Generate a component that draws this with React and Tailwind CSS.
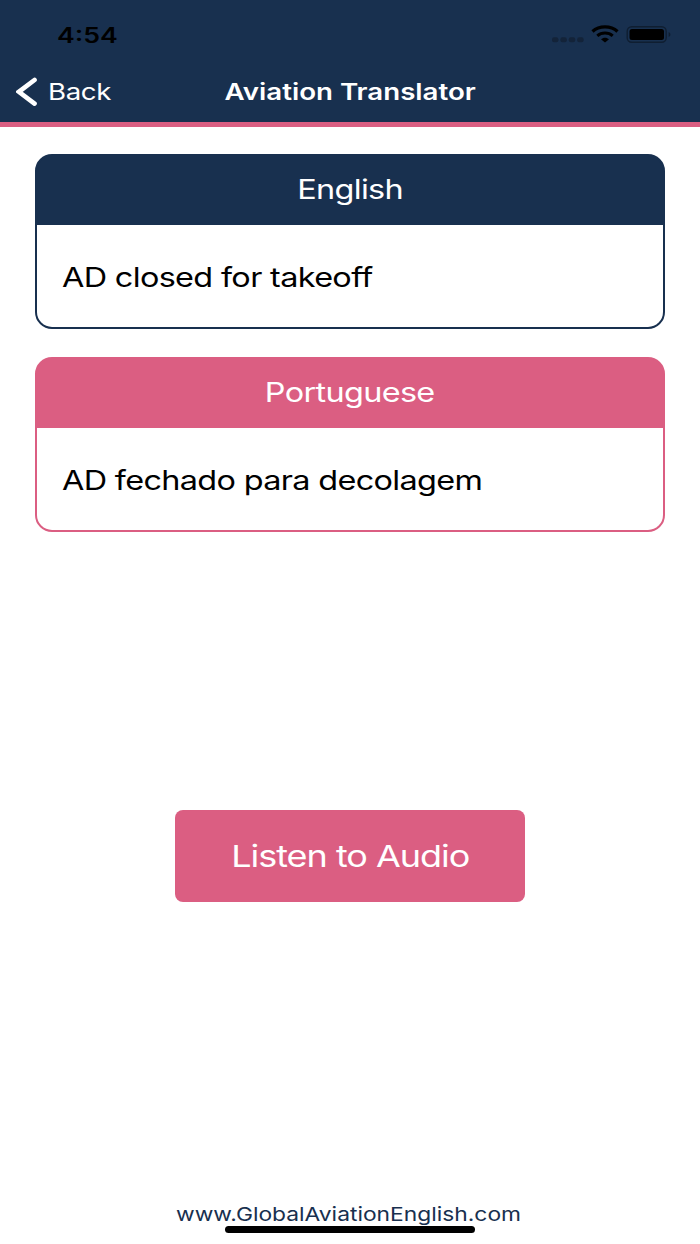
import React from "react";

const StatusBar = () => {
    return(
        <div className="flex h-[61px] items-center justify-between pl-[57px] pr-[29px] pt-2 text-black">
            <span className="origin-left scale-x-[1.24] text-[21.5px] font-semibold leading-7">4:54</span>
            <div className="flex items-center">
                <svg className="h-[24px] w-[120px]" viewBox="0 0 120 24">
                    <g fill="#132339">
                        <rect x="1" y="14.3" width="6.4" height="5" rx="2"/>
                        <rect x="9.4" y="14.3" width="6.4" height="5" rx="2"/>
                        <rect x="17.8" y="14.3" width="6.4" height="5" rx="2"/>
                        <rect x="26.2" y="14.3" width="6.4" height="5" rx="2"/>
                    </g>
                    <g transform="translate(40 3)">
                        <path d="M1.5 5.4C8.3-.6 19.7-.6 26.5 5.4" fill="none" stroke="#000" strokeWidth="3.3"/>
                        <path d="M6.3 9.8C10.6 6 17.4 6 21.7 9.8" fill="none" stroke="#000" strokeWidth="3.1"/>
                        <path d="M10 13.2C12.2 11.1 15.8 11.1 18 13.2L14 16.6Z" fill="#000"/>
                    </g>
                    <rect x="76.2" y="3.7" width="39" height="15.6" rx="4.5" fill="none" stroke="#0f1e31" strokeWidth="1.4"/>
                    <rect x="78.5" y="6" width="34.5" height="11" rx="2.5" fill="#000"/>
                    <path d="M117.6 9C120 9.8 120 13.2 117.6 14Z" fill="#0f1e31"/>
                </svg>
            </div>
        </div>
    )
}

const NavBar = () => {
    return(
        <div className="grid h-[61px] grid-cols-[1fr_auto_1fr] items-center text-white">
            <a className="flex items-center pl-4">
                <svg className="h-[30px] w-[22px]" viewBox="0 0 22 30">
                    <path d="M18.5 3L2.9 14.8L18.5 26.6" fill="none" stroke="#fff" strokeWidth="4.7" strokeLinecap="round"/>
                </svg>
                <span className="ml-[9.5px] origin-left scale-x-[1.2] text-[23px] leading-7 tracking-[-0.3px]">Back</span>
            </a>
            <h1 className="scale-x-[1.23] text-[22.5px] font-semibold leading-7">Aviation Translator</h1>
        </div>
    )
}

const EnglishCard = () => {
    return(
        <div className="h-[175px] rounded-[17px] border-2 border-[#18304f] bg-[#18304f]">
            <div className="flex h-[69px] items-center justify-center text-white">
                <span className="scale-x-[1.2] text-[27px] tracking-[-0.55px]">English</span>
            </div>
            <div className="flex h-[102px] items-center rounded-b-[15px] bg-white pl-[25px] pt-1 text-black">
                <span className="origin-left scale-x-[1.2] text-[27px] tracking-[-0.55px]">AD closed for takeoff</span>
            </div>
        </div>
    )
}

const PortugueseCard = () => {
    return(
        <div className="mt-7 h-[175px] rounded-[17px] border-2 border-[#db5e82] bg-[#db5e82]">
            <div className="flex h-[69px] items-center justify-center text-white">
                <span className="scale-x-[1.2] text-[27px] tracking-[-0.55px]">Portuguese</span>
            </div>
            <div className="flex h-[102px] items-center rounded-b-[15px] bg-white pl-[25px] pt-1 text-black">
                <span className="origin-left scale-x-[1.2] text-[27px] tracking-[-0.55px]">AD fechado para decolagem</span>
            </div>
        </div>
    )
}

const App = () => {
    return(
        <div className="flex h-[1244px] w-[700px] flex-col overflow-hidden bg-white font-['Inter',sans-serif]">
            <header className="h-[127px] border-b-[5px] border-[#db5e82] bg-[#18304f]">
                <StatusBar />
                <NavBar />
            </header>

            <main className="flex flex-1 flex-col px-[35px] pt-[27px]">
                <EnglishCard />
                <PortugueseCard />
                <button className="mt-[278px] flex h-[92px] w-[350px] items-center justify-center self-center rounded-lg bg-[#db5e82] text-white">
                    <span className="scale-x-[1.2] text-[30px] tracking-[-0.85px]">Listen to Audio</span>
                </button>
            </main>

            <footer className="flex flex-col items-center pb-[11px]">
                <span className="scale-x-[1.2] pr-[2px] text-[19px] leading-[22px] text-[#18304f]">www.GlobalAviationEnglish.com</span>
                <div className="h-[7px] w-[250px] rounded-full bg-black"></div>
            </footer>
        </div>
    )
}

export default App;
